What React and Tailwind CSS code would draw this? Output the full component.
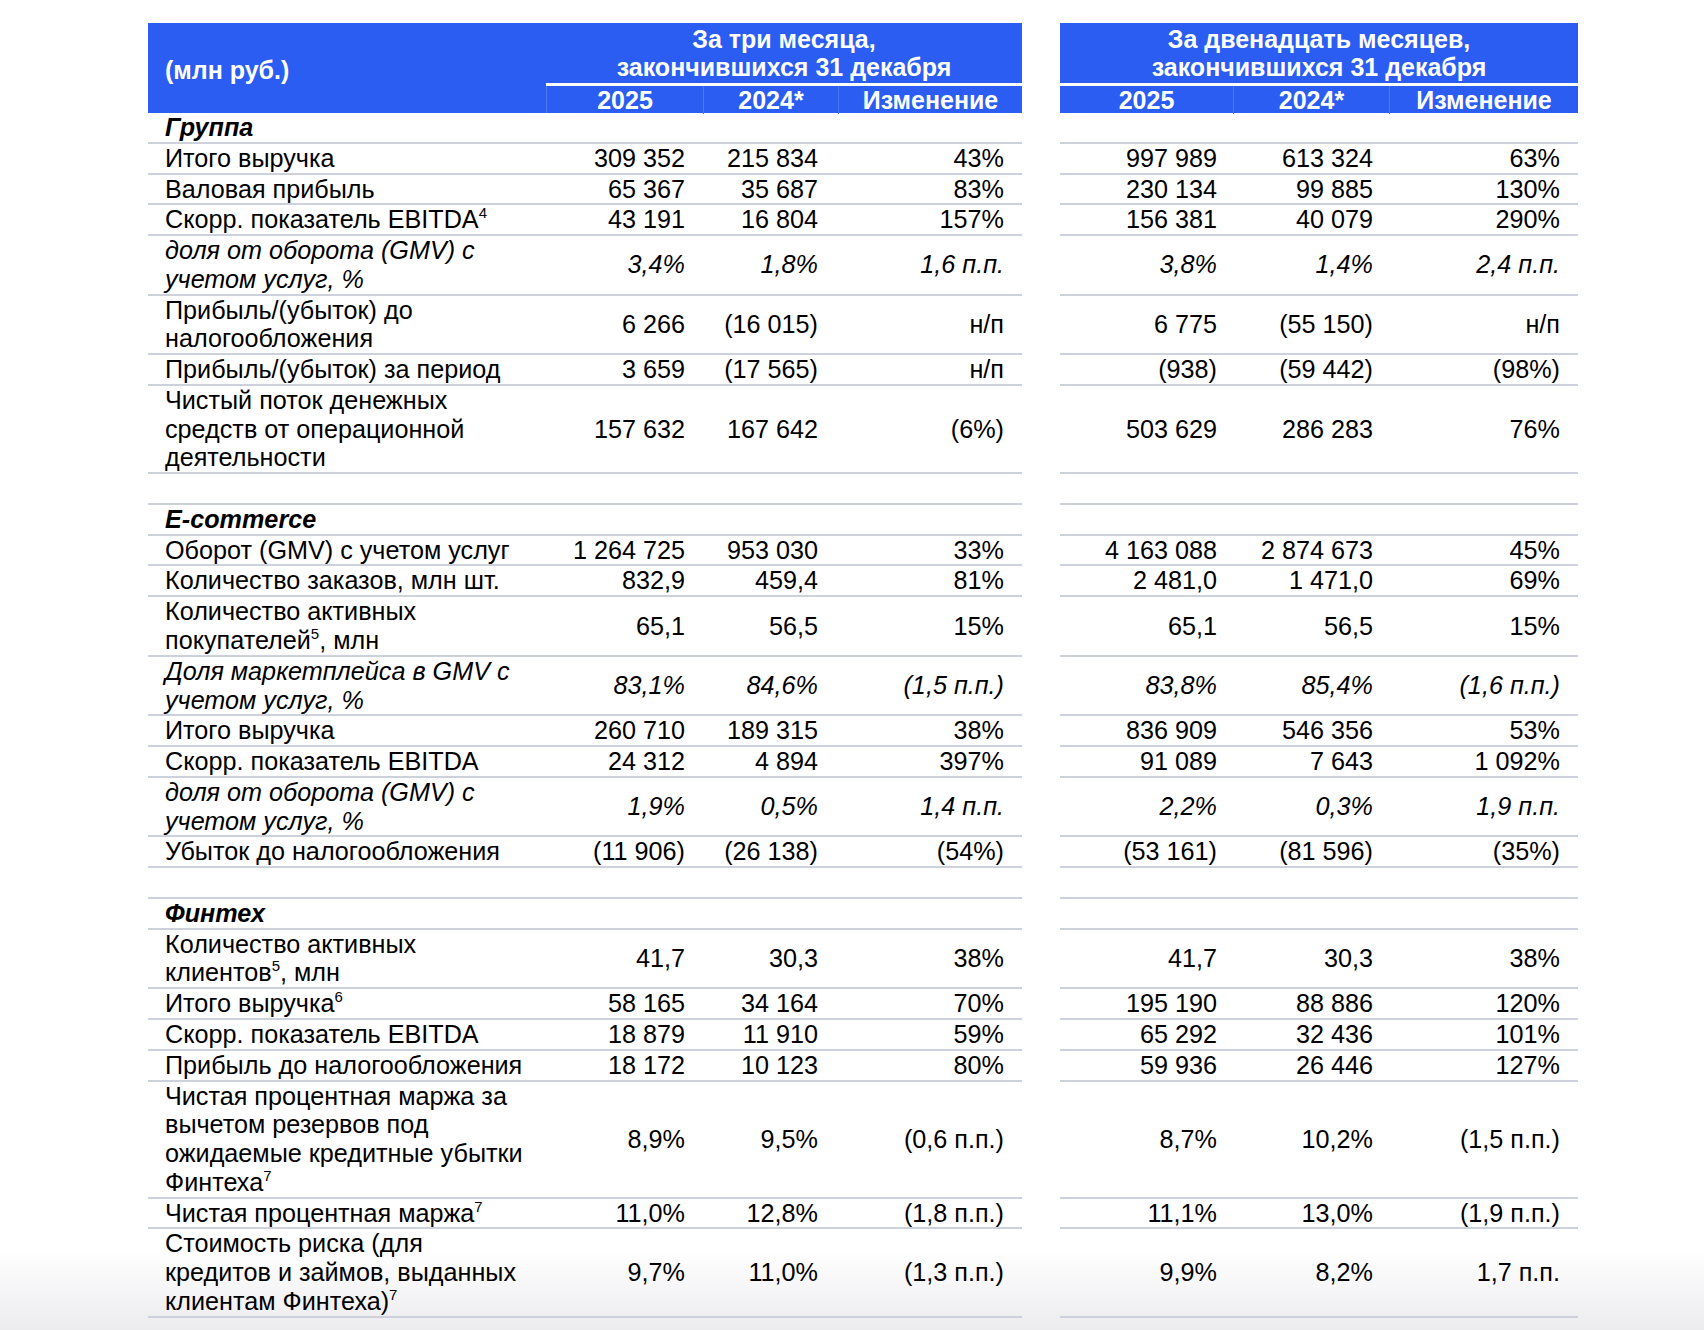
import React from "react";

const Sup = ({ children }) => (
  <sup className="text-[15px] leading-none top-[-10px]">{children}</sup>
);

// строки таблицы: label — массив строк (переносы как в оригинале)
const rows = [
  { section: "Группа" },
  { label: ["Итого выручка"], l: ["309 352", "215 834", "43%"], r: ["997 989", "613 324", "63%"] },
  { label: ["Валовая прибыль"], l: ["65 367", "35 687", "83%"], r: ["230 134", "99 885", "130%"] },
  {
    label: [<>Скорр. показатель EBITDA<Sup>4</Sup></>],
    l: ["43 191", "16 804", "157%"],
    r: ["156 381", "40 079", "290%"],
  },
  {
    label: ["доля от оборота (GMV) с", "учетом услуг, %"],
    italic: true,
    l: ["3,4%", "1,8%", "1,6 п.п."],
    r: ["3,8%", "1,4%", "2,4 п.п."],
  },
  {
    label: ["Прибыль/(убыток) до", "налогообложения"],
    l: ["6 266", "(16 015)", "н/п"],
    r: ["6 775", "(55 150)", "н/п"],
  },
  {
    label: ["Прибыль/(убыток) за период"],
    l: ["3 659", "(17 565)", "н/п"],
    r: ["(938)", "(59 442)", "(98%)"],
  },
  {
    label: ["Чистый поток денежных", "средств от операционной", "деятельности"],
    l: ["157 632", "167 642", "(6%)"],
    r: ["503 629", "286 283", "76%"],
  },
  { spacer: true },
  { section: "E-commerce" },
  {
    label: ["Оборот (GMV) с учетом услуг"],
    l: ["1 264 725", "953 030", "33%"],
    r: ["4 163 088", "2 874 673", "45%"],
  },
  {
    label: ["Количество заказов, млн шт."],
    l: ["832,9", "459,4", "81%"],
    r: ["2 481,0", "1 471,0", "69%"],
  },
  {
    label: ["Количество активных", <>покупателей<Sup>5</Sup>, млн</>],
    l: ["65,1", "56,5", "15%"],
    r: ["65,1", "56,5", "15%"],
  },
  {
    label: ["Доля маркетплейса в GMV с", "учетом услуг, %"],
    italic: true,
    l: ["83,1%", "84,6%", "(1,5 п.п.)"],
    r: ["83,8%", "85,4%", "(1,6 п.п.)"],
  },
  { label: ["Итого выручка"], l: ["260 710", "189 315", "38%"], r: ["836 909", "546 356", "53%"] },
  {
    label: ["Скорр. показатель EBITDA"],
    l: ["24 312", "4 894", "397%"],
    r: ["91 089", "7 643", "1 092%"],
  },
  {
    label: ["доля от оборота (GMV) с", "учетом услуг, %"],
    italic: true,
    l: ["1,9%", "0,5%", "1,4 п.п."],
    r: ["2,2%", "0,3%", "1,9 п.п."],
  },
  {
    label: ["Убыток до налогообложения"],
    l: ["(11 906)", "(26 138)", "(54%)"],
    r: ["(53 161)", "(81 596)", "(35%)"],
  },
  { spacer: true },
  { section: "Финтех" },
  {
    label: ["Количество активных", <>клиентов<Sup>5</Sup>, млн</>],
    l: ["41,7", "30,3", "38%"],
    r: ["41,7", "30,3", "38%"],
  },
  {
    label: [<>Итого выручка<Sup>6</Sup></>],
    l: ["58 165", "34 164", "70%"],
    r: ["195 190", "88 886", "120%"],
  },
  {
    label: ["Скорр. показатель EBITDA"],
    l: ["18 879", "11 910", "59%"],
    r: ["65 292", "32 436", "101%"],
  },
  {
    label: ["Прибыль до налогообложения"],
    l: ["18 172", "10 123", "80%"],
    r: ["59 936", "26 446", "127%"],
  },
  {
    label: [
      "Чистая процентная маржа за",
      "вычетом резервов под",
      "ожидаемые кредитные убытки",
      <>Финтеха<Sup>7</Sup></>,
    ],
    l: ["8,9%", "9,5%", "(0,6 п.п.)"],
    r: ["8,7%", "10,2%", "(1,5 п.п.)"],
  },
  {
    label: [<>Чистая процентная маржа<Sup>7</Sup></>],
    l: ["11,0%", "12,8%", "(1,8 п.п.)"],
    r: ["11,1%", "13,0%", "(1,9 п.п.)"],
  },
  {
    label: ["Стоимость риска (для", "кредитов и займов, выданных", <>клиентам Финтеха)<Sup>7</Sup></>],
    l: ["9,7%", "11,0%", "(1,3 п.п.)"],
    r: ["9,9%", "8,2%", "1,7 п.п."],
  },
];

const Row = ({ row }) => {
  const it = row.italic ? "italic" : "";
  const l = row.l || ["", "", ""];
  const r = row.r || ["", "", ""];
  return (
    <div className="flex">
      <div
        className={`grid grid-cols-[399px_156px_135px_184px] w-[874px] items-center border-b-2 border-[#cdd1db] ${it}`}
      >
        <div className="pl-[17px] whitespace-nowrap">
          {row.section && <div className="font-bold italic">{row.section}</div>}
          {row.spacer && <div>&nbsp;</div>}
          {row.label && row.label.map((line, i) => <div key={i}>{line}</div>)}
        </div>
        <div className="text-right pr-[18px] whitespace-nowrap">{l[0]}</div>
        <div className="text-right pr-[20px] whitespace-nowrap">{l[1]}</div>
        <div className="text-right pr-[18px] whitespace-nowrap">{l[2]}</div>
      </div>
      <div className="w-[38px]" />
      <div
        className={`grid grid-cols-[173px_156px_189px] w-[518px] items-center border-b-2 border-[#cdd1db] ${it}`}
      >
        <div className="text-right pr-4 whitespace-nowrap">{r[0]}</div>
        <div className="text-right pr-4 whitespace-nowrap">{r[1]}</div>
        <div className="text-right pr-[18px] whitespace-nowrap">{r[2]}</div>
      </div>
    </div>
  );
};

const SubHead = ({ cols, widths }) => (
  <div className={`h-[27px] grid ${widths}`}>
    {cols.map((c, i) => (
      <div
        key={i}
        className={`flex items-center justify-center ${i > 0 ? "border-l border-[#4a78f5]" : ""}`}
      >
        {c}
      </div>
    ))}
  </div>
);

export default function App() {
  return (
    <div className="w-[1704px] h-[1330px] bg-linear-to-b from-white from-94% to-[#ececef] pt-[23px] pl-[148px] font-['Liberation_Sans',Arial,sans-serif] text-black">
      {/* Шапка */}
      <div className="flex text-white font-bold text-[25px] leading-[28px]">
        <div className="w-[874px] h-[90px] bg-[#2b5df2] flex">
          <div className="w-[399px] pl-[17px] pt-[3px] flex items-center">(млн руб.)</div>
          <div className="flex-1 flex flex-col">
            <div className="h-[60px] flex flex-col items-center justify-center text-center">
              <div>За три месяца,</div>
              <div>закончившихся 31 декабря</div>
            </div>
            <div className="h-[3px] bg-white" />
            <div className="border-l border-[#4a78f5]">
              <SubHead cols={["2025", "2024*", "Изменение"]} widths="grid-cols-[156px_135px_184px]" />
            </div>
          </div>
        </div>
        <div className="w-[38px]" />
        <div className="w-[518px] h-[90px] bg-[#2b5df2] flex flex-col">
          <div className="h-[60px] flex flex-col items-center justify-center text-center">
            <div>За двенадцать месяцев,</div>
            <div>закончившихся 31 декабря</div>
          </div>
          <div className="h-[3px] bg-white" />
          <SubHead cols={["2025", "2024*", "Изменение"]} widths="grid-cols-[173px_156px_189px]" />
        </div>
      </div>

      {/* Тело таблицы */}
      <div className="text-[25.2px] leading-[28.76px]">
        {rows.map((row, i) => (
          <Row key={i} row={row} />
        ))}
      </div>
    </div>
  );
}
